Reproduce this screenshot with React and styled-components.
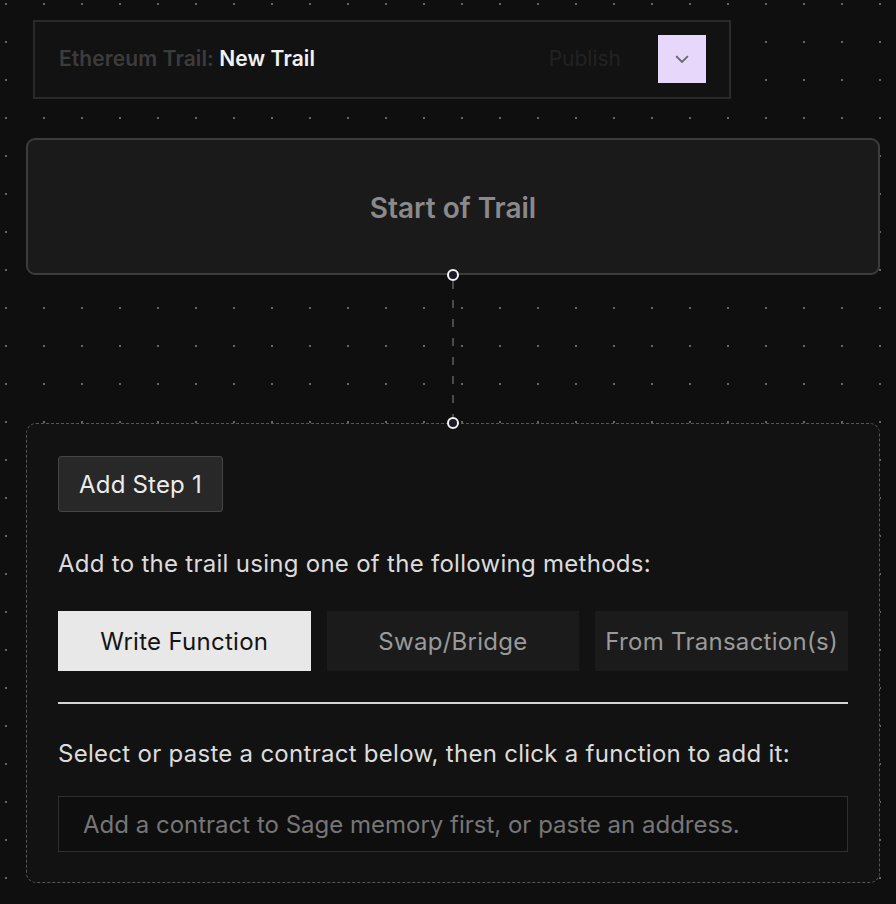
import React from "react";
import styled, { createGlobalStyle } from "styled-components";

const GlobalStyle = createGlobalStyle`
  html, body {
    margin: 0;
    padding: 0;
    background-color: #0f0f0f;
  }
  body {
    font-family: Inter, "Liberation Sans", sans-serif;
    min-height: 904px;
    background-image: radial-gradient(circle at 1px 1px, #666666 0.9px, transparent 1px);
    background-size: 38px 38px;
    background-position: 5px 3px;
  }
`;

const tabs = ["Write Function", "Swap/Bridge", "From Transaction(s)"];

function App() {
  return (
    <>
      <GlobalStyle />
      <Canvas>
        <TrailBar>
          <TrailTitle>
            Ethereum Trail: <strong>New Trail</strong>
          </TrailTitle>
          <Publish>Publish</Publish>
          <MenuButton aria-label="More">
            <svg width="18" height="18" viewBox="0 0 24 24" fill="none" stroke="#6a6a6a" strokeWidth="2.4" strokeLinecap="square">
              <path d="M5 9l7 7 7-7" />
            </svg>
          </MenuButton>
        </TrailBar>

        <StartCard>Start of Trail</StartCard>

        <Connector>
          <Handle $top />
          <svg width="4" height="148" viewBox="0 0 4 148">
            <line x1="2" y1="6" x2="2" y2="144" stroke="#5a5a5a" strokeWidth="1.6" strokeDasharray="8 11" />
          </svg>
          <Handle />
        </Connector>

        <StepBox>
          <StepButton>Add Step 1</StepButton>
          <Prompt $gap={37}>Add to the trail using one of the following methods:</Prompt>
          <Tabs>
            {tabs.map((t, i) => (
              <Tab key={t} $active={i === 0}>{t}</Tab>
            ))}
          </Tabs>
          <Divider />
          <Prompt $gap={35}>Select or paste a contract below, then click a function to add it:</Prompt>
          <ContractInput placeholder="Add a contract to Sage memory first, or paste an address." />
        </StepBox>
      </Canvas>
    </>
  );
}

export default App;

const Canvas = styled.div`
  width: 854px;
  padding: 20px 0 20px 26px;
  display: flex;
  flex-direction: column;
`;

const TrailBar = styled.div`
  margin-left: 7px;
  width: 698px;
  height: 79px;
  box-sizing: border-box;
  border: 2px solid #2a2a2a;
  background: #121212;
  display: flex;
  align-items: center;
  padding: 0 23px 2px 24px;
`;

const TrailTitle = styled.div`
  flex: 1;
  font-size: 21px;
  font-weight: 600;
  letter-spacing: 0.1px;
  color: #3c3c3c;

  strong {
    color: #f2f2f2;
    font-weight: 600;
  }
`;

const Publish = styled.span`
  font-size: 21px;
  color: #222222;
  margin-right: 37px;
`;

const MenuButton = styled.button`
  width: 48px;
  height: 48px;
  border: none;
  background: #e6d7fb;
  display: flex;
  align-items: center;
  justify-content: center;
  padding: 0;
  cursor: pointer;
`;

const StartCard = styled.div`
  margin-top: 39px;
  height: 137px;
  box-sizing: border-box;
  border: 2px solid #3c3c3c;
  border-radius: 9px;
  background: #1a1a1a;
  display: flex;
  align-items: center;
  justify-content: center;
  font-size: 28px;
  font-weight: 600;
  color: #8a8a8a;
  padding-top: 2px;
`;

const Connector = styled.div`
  position: relative;
  height: 148px;
  display: flex;
  justify-content: center;
  margin-left: -1px;
`;

const Handle = styled.span`
  position: absolute;
  left: 50%;
  ${(p) => (p.$top ? "top: -6px;" : "bottom: -6px;")}
  width: 8px;
  height: 8px;
  margin-left: -6px;
  border-radius: 50%;
  border: 2px solid #f4f4f4;
  background: #1c1b26;
  z-index: 2;
`;

const StepBox = styled.div`
  border: 1.5px dashed #565656;
  border-radius: 10px;
  background: #121212;
  padding: 32px 31px 30px 31px;
  display: flex;
  flex-direction: column;
  align-items: flex-start;
`;

const StepButton = styled.button`
  height: 56px;
  padding: 0 20px 0 20px;
  border: 1.5px solid #454545;
  border-radius: 3px;
  background: #282828;
  color: #ececec;
  font-family: inherit;
  font-size: 24px;
  letter-spacing: 0.2px;
`;

const Prompt = styled.p`
  margin: ${(p) => p.$gap}px 0 0;
  font-size: 24px;
  line-height: 30px;
  letter-spacing: 0.28px;
  color: #dcdcdc;
`;

const Tabs = styled.div`
  margin-top: 32px;
  width: 100%;
  display: grid;
  grid-template-columns: repeat(3, 1fr);
  gap: 16px;
`;

const Tab = styled.button`
  height: 60px;
  border: none;
  font-family: inherit;
  font-size: 24px;
  letter-spacing: 0.28px;
  background: ${(p) => (p.$active ? "#e8e8e8" : "#1b1b1b")};
  color: ${(p) => (p.$active ? "#141414" : "#9a9a9a")};
  padding: 0;
`;

const Divider = styled.hr`
  width: 100%;
  margin: 31px 0 0;
  border: none;
  border-top: 2px solid #d4d4d4;
`;

const ContractInput = styled.input`
  margin-top: 27px;
  width: 100%;
  height: 56px;
  box-sizing: border-box;
  border: 1.5px solid #2f2f2f;
  background: #0e0e0e;
  padding: 0 24px;
  font-family: inherit;
  font-size: 24px;
  letter-spacing: 0;
  color: #dcdcdc;
  outline: none;

  &::placeholder {
    color: #767676;
  }
`;
